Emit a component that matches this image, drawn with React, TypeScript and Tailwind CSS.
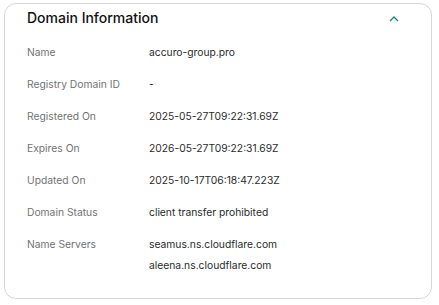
import React from "react";

const rows: { label: string; values: string[] }[] = [
  { label: "Name", values: ["accuro-group.pro"] },
  { label: "Registry Domain ID", values: ["-"] },
  { label: "Registered On", values: ["2025-05-27T09:22:31.69Z"] },
  { label: "Expires On", values: ["2026-05-27T09:22:31.69Z"] },
  { label: "Updated On", values: ["2025-10-17T06:18:47.223Z"] },
  { label: "Domain Status", values: ["client transfer prohibited"] },
  { label: "Name Servers", values: ["seamus.ns.cloudflare.com", "aleena.ns.cloudflare.com"] },
];

export default function App() {
  return (
    <div className="w-[439px] h-[305px] bg-white pt-[3px] pl-[4px]" style={{ fontFamily: "Inter, 'Noto Sans', sans-serif" }}>
      <div className="w-[428px] h-[296px] border border-[#d4d7da] rounded-[12px] pl-[22px] pr-[32px] pt-[1px]">
        <div className="flex items-center justify-between h-[26px]">
          <div className="text-[14px] leading-[26px] text-[#111] font-medium">Domain Information</div>
          <svg width="10" height="6" viewBox="0 0 10 6" className="mt-[2px]">
            <path d="M1 5 L5 1 L9 5" fill="none" stroke="#1a8088" strokeWidth="1.3" />
          </svg>
        </div>
        <div className="mt-[5px] flex flex-col">
          {rows.map((r) => (
            <div key={r.label} className="flex min-h-[32px] items-start pt-[8px]">
              <div className="w-[122px] text-[10.3px] leading-[16px] text-[#737373]">{r.label}</div>
              <div className="flex flex-col gap-[5px] text-[10.3px] leading-[16px] text-[#2b2b2b]">
                {r.values.map((v) => (
                  <div key={v}>{v}</div>
                ))}
              </div>
            </div>
          ))}
        </div>
      </div>
    </div>
  );
}
